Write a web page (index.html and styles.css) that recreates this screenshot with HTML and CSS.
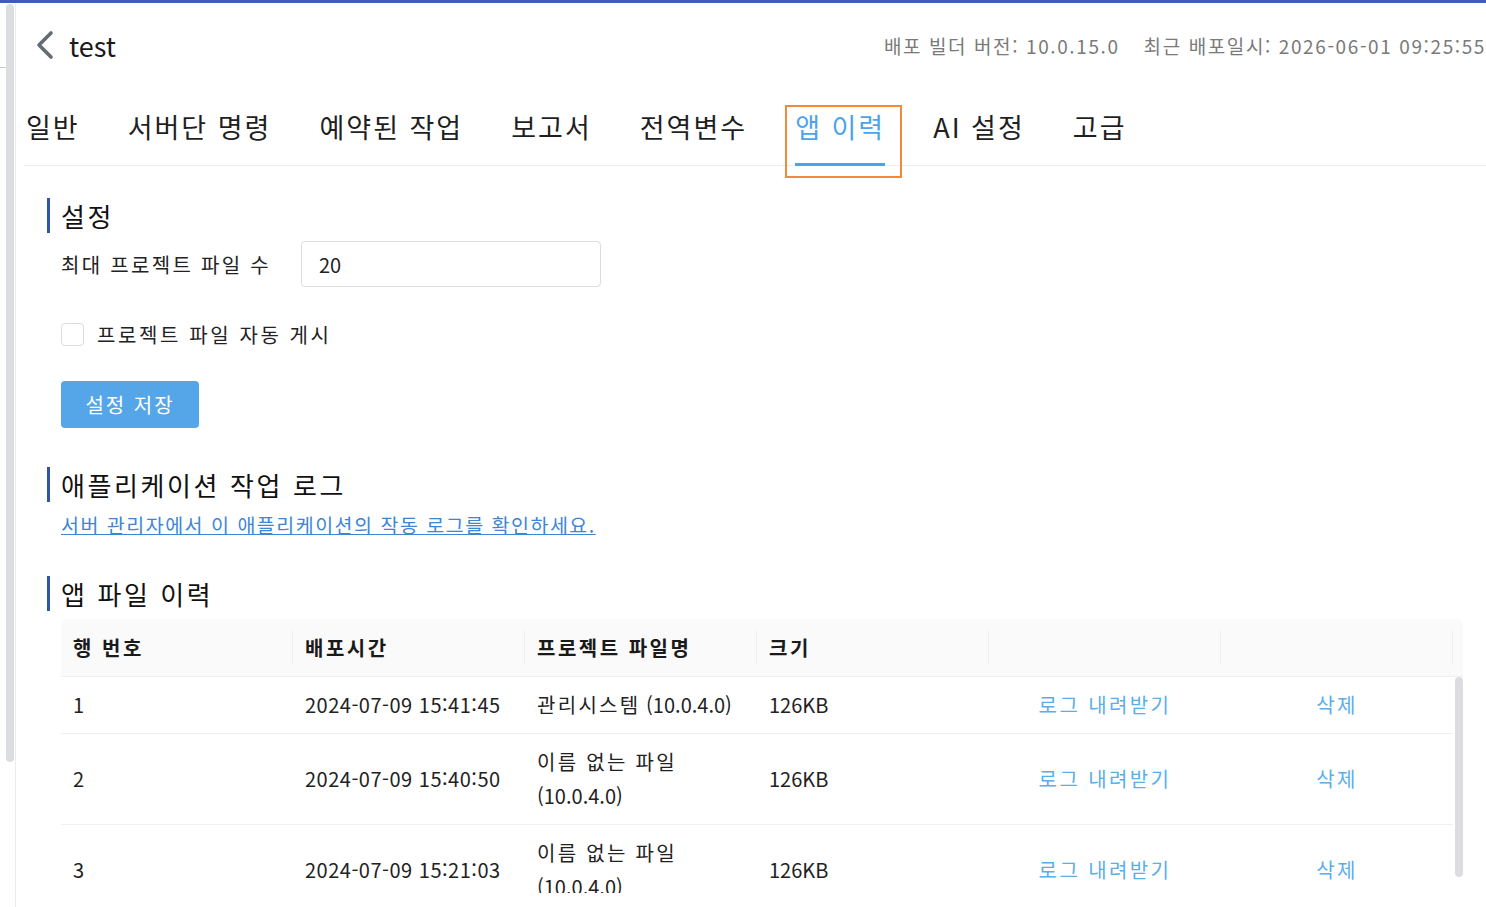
FILE: index.html
```html
<!DOCTYPE html>
<html lang="ko">
<head>
    <meta charset="UTF-8">
    <meta name="viewport" content="width=device-width, initial-scale=1.0">
    <title>test - 앱 이력</title>
    <link rel="stylesheet" href="styles.css">
</head>
<body>
    <div class="topbar"></div>
    <div class="layout">
        <div class="rail">
            <div class="rail-edge"></div>
            <div class="rail-thumb"></div>
        </div>

        <div class="main">
            <div class="header">
                <div class="title">
                    <svg class="back" width="20" height="30" viewBox="0 0 20 30">
                        <path d="M16 3 L4 15 L16 27" fill="none" stroke="#666a72" stroke-width="3.6" stroke-linecap="round" stroke-linejoin="round"/>
                    </svg>
                    <span>test</span>
                </div>
                <div class="meta">
                    <span>배포 빌더 버전: 10.0.15.0</span>
                    <span>최근 배포일시: 2026-06-01 09:25:55</span>
                </div>
            </div>

            <div class="tabs">
                <div class="tab">일반</div>
                <div class="tab">서버단 명령</div>
                <div class="tab">예약된 작업</div>
                <div class="tab">보고서</div>
                <div class="tab">전역변수</div>
                <div class="tab active">앱 이력</div>
                <div class="tab">AI 설정</div>
                <div class="tab">고급</div>
            </div>

            <div class="content">
                <h2 class="section-title">설정</h2>
                <div class="form-row">
                    <label class="form-label">최대 프로젝트 파일 수</label>
                    <input class="text-input" type="text" value="20">
                </div>
                <div class="check-row">
                    <span class="checkbox"></span>
                    <span class="check-label">프로젝트 파일 자동 게시</span>
                </div>
                <button class="btn-primary">설정 저장</button>

                <h2 class="section-title log-title">애플리케이션 작업 로그</h2>
                <a class="log-link" href="#">서버 관리자에서 이 애플리케이션의 작동 로그를 확인하세요.</a>

                <h2 class="section-title files-title">앱 파일 이력</h2>
                <div class="table">
                    <div class="thead">
                        <div class="th">행 번호</div>
                        <div class="th">배포시간</div>
                        <div class="th">프로젝트 파일명</div>
                        <div class="th">크기</div>
                        <div class="th"></div>
                        <div class="th"></div>
                    </div>
                    <div class="tbody">
                        <div class="rows">
                            <div class="tr">
                                <div class="td">1</div>
                                <div class="td date">2024-07-09 15:41:45</div>
                                <div class="td"><span><span class="ko">관리시스템</span> (10.0.4.0)</span></div>
                                <div class="td">126KB</div>
                                <div class="td center"><a class="action" href="#">로그 내려받기</a></div>
                                <div class="td center"><a class="action" href="#">삭제</a></div>
                            </div>
                            <div class="tr">
                                <div class="td">2</div>
                                <div class="td date">2024-07-09 15:40:50</div>
                                <div class="td"><span><span class="ko">이름 없는 파일</span> (10.0.4.0)</span></div>
                                <div class="td">126KB</div>
                                <div class="td center"><a class="action" href="#">로그 내려받기</a></div>
                                <div class="td center"><a class="action" href="#">삭제</a></div>
                            </div>
                            <div class="tr">
                                <div class="td">3</div>
                                <div class="td date">2024-07-09 15:21:03</div>
                                <div class="td"><span><span class="ko">이름 없는 파일</span> (10.0.4.0)</span></div>
                                <div class="td">126KB</div>
                                <div class="td center"><a class="action" href="#">로그 내려받기</a></div>
                                <div class="td center"><a class="action" href="#">삭제</a></div>
                            </div>
                        </div>
                        <div class="scroll-thumb"></div>
                    </div>
                </div>
            </div>
        </div>
    </div>
</body>
</html>
```

FILE: styles.css
```css
html, body {
    margin: 0;
    height: 100%;
    overflow: hidden;
}
body {
    font-family: "Noto Sans CJK KR", "Noto Sans", sans-serif;
    color: #222;
    background: #fff;
}
.topbar {
    height: 3px;
    background-color: #3a5fb3;
}
.layout {
    display: flex;
    height: 904px;
}

/* left rail with its scrollbar */
.rail {
    display: flex;
    width: 15px;
    border-right: 1px solid #ececec;
    flex-shrink: 0;
}
.rail-edge {
    width: 6px;
    height: 64px;
    border-bottom: 1px solid #c8ccd2;
}
.rail-thumb {
    width: 8px;
    height: 758px;
    margin-top: 1px;
    border-radius: 4px;
    background-color: #dcdde0;
}

.main {
    flex: 1;
    min-width: 0;
    padding-left: 8px;
}

/* header */
.header {
    display: flex;
    justify-content: space-between;
    align-items: center;
    height: 84px;
    padding-bottom: 4px;
}
.title {
    display: flex;
    align-items: center;
    gap: 14px;
    padding-left: 11px;
    font-size: 27px;
    color: #1a1a1a;
}
.back { display: block; }
.meta {
    display: flex;
    gap: 24px;
    font-size: 19px;
    letter-spacing: 1.6px;
    color: #7a7a7a;
    white-space: nowrap;
}

/* tabs */
.tabs {
    display: flex;
    gap: 48px;
    padding-left: 2px;
    border-bottom: 1px solid #ededed;
}
.tab {
    position: relative;
    font-size: 27px;
    letter-spacing: 2px;
    line-height: 36px;
    padding: 18px 0 18px;
    border-bottom: 3px solid transparent;
    margin-bottom: -1px;
    color: #1f1f1f;
    white-space: nowrap;
}
.tab.active {
    color: #4ea3e7;
    border-bottom-color: #4ea3e7;
}
.tab.active::after {
    content: "";
    position: absolute;
    left: -10px;
    right: -17px;
    top: 14px;
    bottom: -15px;
    border: 2px solid #f5893a;
}

/* content */
.content {
    padding: 32px 0 0 23px;
}
.section-title {
    margin: 0;
    height: 35px;
    line-height: 35px;
    font-size: 26px;
    letter-spacing: 2.6px;
    font-weight: normal;
    border-left: 3px solid #2f56a3;
    padding-left: 11px;
    color: #111;
}
.form-row {
    display: flex;
    align-items: center;
    margin: 8px 0 0 14px;
}
.form-label {
    font-size: 20px;
    letter-spacing: 2.3px;
    margin-right: 30px;
}
.text-input {
    width: 300px;
    height: 46px;
    box-sizing: border-box;
    border: 1px solid #dcdcdc;
    border-radius: 4px;
    padding: 0 17px;
    font-family: inherit;
    font-size: 20px;
    color: #222;
}
.check-row {
    display: flex;
    align-items: center;
    gap: 13px;
    margin: 33px 0 0 14px;
    font-size: 20px;
}
.check-label { letter-spacing: 2.6px; }
.checkbox {
    width: 23px;
    height: 23px;
    box-sizing: border-box;
    border: 1px solid #dcdcdc;
    border-radius: 4px;
}
.btn-primary {
    display: block;
    margin: 32px 0 0 14px;
    width: 138px;
    height: 47px;
    border: none;
    border-radius: 4px;
    background-color: #55a6e9;
    color: #fff;
    font-family: inherit;
    font-size: 20px;
    letter-spacing: 2px;
}
.log-title { margin-top: 39px; }
.log-link {
    display: inline-block;
    margin: 8px 0 0 14px;
    font-size: 19.5px;
    letter-spacing: 1.5px;
    color: #3d86d6;
    text-decoration: underline;
}
.files-title { margin-top: 37px; }

/* table */
.table {
    margin: 8px 0 0 14px;
    width: 1402px;
}
.thead {
    display: grid;
    grid-template-columns: repeat(6, 232px) 10px;
    height: 57px;
    background-color: #fafafa;
    border-bottom: 1px solid #efefef;
    border-radius: 6px 6px 0 0;
}
.th {
    display: flex;
    align-items: center;
    padding-left: 12px;
    font-size: 20px;
    letter-spacing: 2.5px;
    font-weight: bold;
    color: #1a1a1a;
    position: relative;
}
.th::after {
    content: "";
    position: absolute;
    right: 0;
    top: 12px;
    bottom: 12px;
    width: 1px;
    background-color: #ededed;
}
.tbody {
    display: flex;
    height: 216px;
    overflow: hidden;
}
.rows {
    width: 1392px;
}
.scroll-thumb {
    width: 8px;
    height: 200px;
    margin-left: 2px;
    border-radius: 4px;
    background-color: #dcdde0;
}
.tr {
    display: grid;
    grid-template-columns: repeat(6, 232px);
    border-bottom: 1px solid #efefef;
}
.td {
    display: flex;
    align-items: center;
    padding: 11px 12px;
    font-size: 20px;
    line-height: 34px;
    color: #222;
}
.td.date { letter-spacing: 0.5px; }
.td.center { justify-content: center; }
.ko { letter-spacing: 2.3px; }
.action {
    color: #5aaeea;
    letter-spacing: 2.4px;
    text-decoration: none;
}
```
